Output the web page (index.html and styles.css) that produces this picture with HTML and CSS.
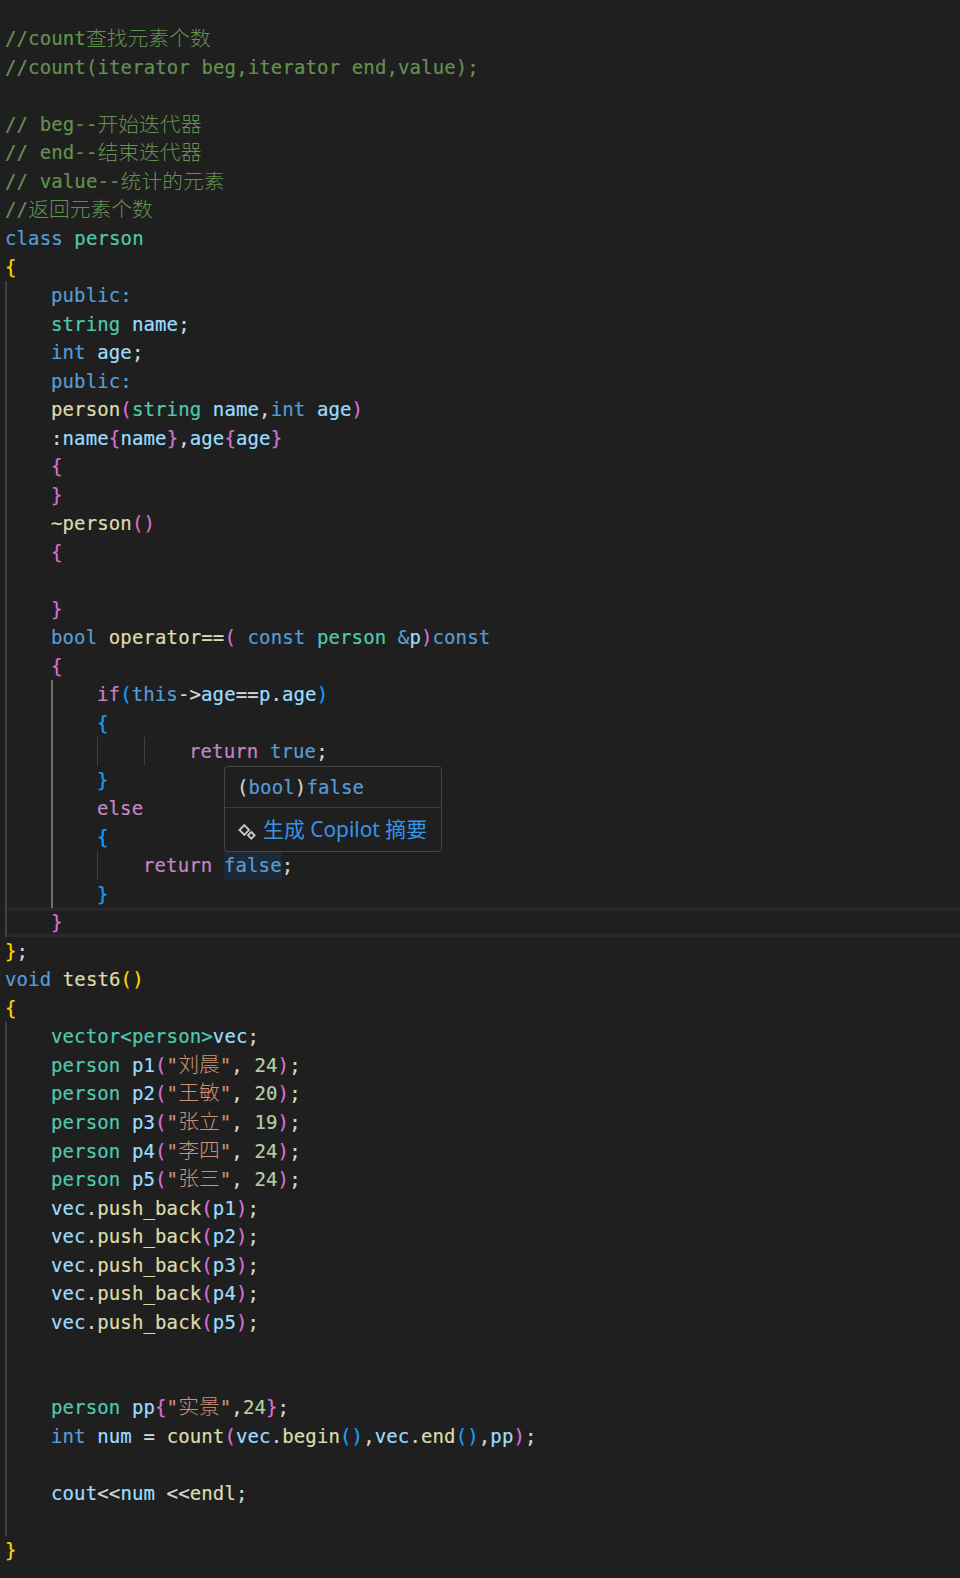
FILE: index.html

```html
<!DOCTYPE html>
<html lang="zh">
<head>
  <meta charset="UTF-8" />
  <title>count</title>
  <link rel="stylesheet" href="styles.css">
</head>
<body>
  <div class="editor">
    <div class="ln cm">//count<span class="cjk">查找元素个数</span></div>
    <div class="ln cm">//count(iterator beg,iterator end,value);</div>
    <div class="ln"></div>
    <div class="ln cm">// beg--<span class="cjk">开始迭代器</span></div>
    <div class="ln cm">// end--<span class="cjk">结束迭代器</span></div>
    <div class="ln cm">// value--<span class="cjk">统计的元素</span></div>
    <div class="ln cm">//<span class="cjk">返回元素个数</span></div>
    <div class="ln"><span class="k">class</span> <span class="t">person</span></div>
    <div class="ln"><span class="b1">{</span></div>

    <div class="block">
      <div class="ln"><span class="k">public:</span></div>
      <div class="ln"><span class="t">string</span> <span class="v">name</span>;</div>
      <div class="ln"><span class="k">int</span> <span class="v">age</span>;</div>
      <div class="ln"><span class="k">public:</span></div>
      <div class="ln"><span class="f">person</span><span class="b2">(</span><span class="t">string</span> <span class="v">name</span>,<span class="k">int</span> <span class="v">age</span><span class="b2">)</span></div>
      <div class="ln">:<span class="v">name</span><span class="b2">{</span><span class="v">name</span><span class="b2">}</span>,<span class="v">age</span><span class="b2">{</span><span class="v">age</span><span class="b2">}</span></div>
      <div class="ln"><span class="b2">{</span></div>
      <div class="ln"><span class="b2">}</span></div>
      <div class="ln"><span class="f">~person</span><span class="b2">()</span></div>
      <div class="ln"><span class="b2">{</span></div>
      <div class="ln"></div>
      <div class="ln"><span class="b2">}</span></div>
      <div class="ln"><span class="k">bool</span> <span class="f">operator==</span><span class="b2">(</span> <span class="k">const</span> <span class="t">person</span> <span class="k">&amp;</span><span class="v">p</span><span class="b2">)</span><span class="k">const</span></div>
      <div class="ln"><span class="b2">{</span></div>

      <div class="block active">
        <div class="ln"><span class="c">if</span><span class="b3">(</span><span class="k">this</span>-&gt;<span class="v">age</span>==<span class="v">p</span>.<span class="v">age</span><span class="b3">)</span></div>
        <div class="ln"><span class="b3">{</span></div>
        <div class="block thin">
          <div class="block thin">
            <div class="ln"><span class="c">return</span> <span class="k">true</span>;</div>
          </div>
        </div>
        <div class="ln"><span class="b3">}</span></div>
        <div class="ln"><span class="c">else</span></div>
        <div class="ln"><span class="b3">{</span></div>
        <div class="block thin">
          <div class="ln"><span class="c">return</span> <span class="k sel">false</span>;</div>
        </div>
        <div class="ln"><span class="b3">}</span></div>
      </div>

      <div class="ln current"><span class="b2">}</span></div>
    </div>

    <div class="ln"><span class="b1">}</span>;</div>
    <div class="ln"><span class="k">void</span> <span class="f">test6</span><span class="b1">()</span></div>
    <div class="ln"><span class="b1">{</span></div>

    <div class="block">
      <div class="ln"><span class="t">vector&lt;person&gt;</span><span class="v">vec</span>;</div>
      <div class="ln"><span class="t">person</span> <span class="v">p1</span><span class="b2">(</span><span class="s">"<span class="cjk">刘晨</span>"</span>, <span class="n">24</span><span class="b2">)</span>;</div>
      <div class="ln"><span class="t">person</span> <span class="v">p2</span><span class="b2">(</span><span class="s">"<span class="cjk">王敏</span>"</span>, <span class="n">20</span><span class="b2">)</span>;</div>
      <div class="ln"><span class="t">person</span> <span class="v">p3</span><span class="b2">(</span><span class="s">"<span class="cjk">张立</span>"</span>, <span class="n">19</span><span class="b2">)</span>;</div>
      <div class="ln"><span class="t">person</span> <span class="v">p4</span><span class="b2">(</span><span class="s">"<span class="cjk">李四</span>"</span>, <span class="n">24</span><span class="b2">)</span>;</div>
      <div class="ln"><span class="t">person</span> <span class="v">p5</span><span class="b2">(</span><span class="s">"<span class="cjk">张三</span>"</span>, <span class="n">24</span><span class="b2">)</span>;</div>
      <div class="ln"><span class="v">vec</span>.<span class="f">push_back</span><span class="b2">(</span><span class="v">p1</span><span class="b2">)</span>;</div>
      <div class="ln"><span class="v">vec</span>.<span class="f">push_back</span><span class="b2">(</span><span class="v">p2</span><span class="b2">)</span>;</div>
      <div class="ln"><span class="v">vec</span>.<span class="f">push_back</span><span class="b2">(</span><span class="v">p3</span><span class="b2">)</span>;</div>
      <div class="ln"><span class="v">vec</span>.<span class="f">push_back</span><span class="b2">(</span><span class="v">p4</span><span class="b2">)</span>;</div>
      <div class="ln"><span class="v">vec</span>.<span class="f">push_back</span><span class="b2">(</span><span class="v">p5</span><span class="b2">)</span>;</div>
      <div class="ln"></div>
      <div class="ln"></div>
      <div class="ln"><span class="t">person</span> <span class="v">pp</span><span class="b2">{</span><span class="s">"<span class="cjk">实景</span>"</span>,<span class="n">24</span><span class="b2">}</span>;</div>
      <div class="ln"><span class="k">int</span> <span class="v">num</span> = <span class="f">count</span><span class="b2">(</span><span class="v">vec</span>.<span class="f">begin</span><span class="b3">()</span>,<span class="v">vec</span>.<span class="f">end</span><span class="b3">()</span>,<span class="v">pp</span><span class="b2">)</span>;</div>
      <div class="ln"></div>
      <div class="ln"><span class="v">cout</span>&lt;&lt;<span class="v">num</span> &lt;&lt;<span class="f">endl</span>;</div>
      <div class="ln"></div>
    </div>

    <div class="ln"><span class="b1">}</span></div>

    <div class="hover">
      <div class="hover-sig">(<span class="k">bool</span>)<span class="k">false</span></div>
      <div class="hover-action">
        <svg class="spark" width="20" height="20" viewBox="0 0 20 20" fill="none" stroke="#c8c8c8" stroke-width="1.9">
          <path d="M8.3 5.2 L13.1 10 L8.3 14.8 L3.5 10 Z" />
          <path d="M15.3 12 L18.6 15.3 L15.3 18.6 L12 15.3 Z" />
        </svg>
        <span class="action-text">生成 Copilot 摘要</span>
      </div>
    </div>
  </div>
</body>
</html>
```

FILE: styles.css

```css
html, body {
  margin: 0;
  padding: 0;
  background: #1f1f1f;
}

.editor {
  position: relative;
  min-height: 1578px;
  box-sizing: border-box;
  padding: 24.4px 0 0 5px;
  font-family: "DejaVu Sans Mono", "Noto Sans CJK SC", monospace;
  font-size: 19px;
  letter-spacing: 0.12px;
  color: #d4d4d4;
  -webkit-text-stroke: 0.2px;
}

.ln {
  height: 28.52px;
  line-height: 28.52px;
  white-space: pre;
}

/* indent guides */
.block {
  padding-left: 44px;
  border-left: 2px solid #404040;
}
.block.active {
  border-left-color: #707070;
}
.block.thin {
  padding-left: 45px;
  border-left-width: 1px;
}
.block.thin .block.thin {
  margin-left: 1px;
  padding-left: 44px;
}

.current {
  box-sizing: border-box;
  margin-left: -44px;
  padding-left: 44px;
  line-height: 22.52px;
  border-top: 3px solid #282828;
  border-bottom: 3px solid #282828;
}

.cjk {
  font-family: "Noto Sans CJK SC", sans-serif;
  font-size: 20.8px;
  line-height: 0;
  letter-spacing: 0;
  font-weight: 300;
  -webkit-text-stroke: 0;
}
.cm .cjk {
  vertical-align: -1px;
}

/* token colours */
.cm { color: #639150; }
.k { color: #569cd6; }
.t { color: #4ec9b0; }
.v { color: #9cdcfe; }
.f { color: #dcdcaa; }
.c { color: #c586c0; }
.s { color: #ce9178; }
.n { color: #b5cea8; }
.b1 { color: #ffd700; }
.b2 { color: #da70d6; }
.b3 { color: #179fff; }

.sel {
  display: inline-block;
  background: #1d2a35;
}

/* hover popup over the code */
.hover {
  position: absolute;
  left: 224px;
  top: 766px;
  width: 218px;
  height: 86px;
  box-sizing: border-box;
  display: flex;
  flex-direction: column;
  background: #1f1f1f;
  border: 1px solid #454545;
  border-radius: 4px;
}
.hover-sig {
  height: 40px;
  line-height: 40px;
  padding-left: 12px;
  border-bottom: 1px solid #3a3a3a;
}
.hover-action {
  flex: 1;
  display: flex;
  align-items: center;
  gap: 7px;
  padding-left: 11px;
  letter-spacing: 0;
}
.spark {
  flex: none;
}
.action-text {
  margin-top: -3px;
  font-family: "Noto Sans", "Noto Sans CJK SC", sans-serif;
  font-size: 20.9px;
  color: #3794e8;
  -webkit-text-stroke: 0;
}
```
